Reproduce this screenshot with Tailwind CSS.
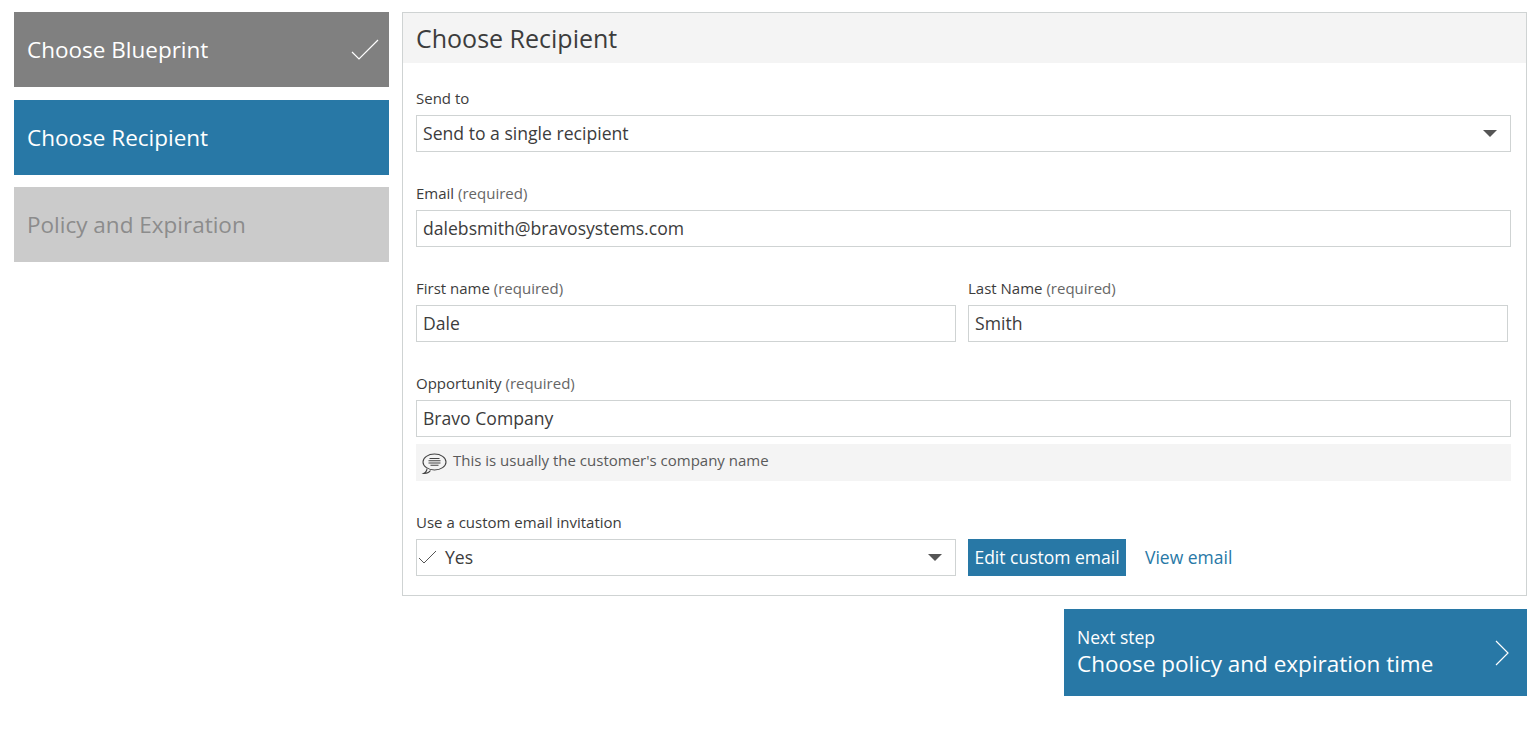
<!DOCTYPE html>
<html lang="en">
<head>
    <meta charset="UTF-8">
    <title>Choose Recipient</title>
    <script src="https://cdn.jsdelivr.net/npm/@tailwindcss/browser@4"></script>
</head>
<body class="bg-white font-['Open_Sans',sans-serif] text-[#3c3c3c]">
    <div class="flex items-start gap-[13px] pt-3 pl-[14px] w-[1527px]">
        <!-- Steps -->
        <div class="w-[375px] shrink-0 flex flex-col">
            <div class="h-[75px] bg-[#808080] text-white text-[22.5px] flex items-center justify-between pl-[13px] pr-[10px]">
                <span>Choose Blueprint</span>
                <svg width="28" height="22" viewBox="0 0 28 22" fill="none" stroke="#fff" stroke-width="1.2"><path d="M1 13l7 7L27 1"/></svg>
            </div>
            <div class="h-[75px] mt-[13px] bg-[#2878a6] text-white text-[22.5px] flex items-center pl-[13px]">Choose Recipient</div>
            <div class="h-[75px] mt-3 bg-[#cbcbcb] text-[#8c8c8c] text-[22.5px] flex items-center pl-[13px]">Policy and Expiration</div>
        </div>

        <!-- Main panel -->
        <div class="flex-1 min-w-0">
            <div class="border border-[#cfd3d3] h-[584px]">
                <div class="h-[50px] bg-[#f4f4f4] pl-[13px] text-[25px] leading-[50px]">Choose Recipient</div>
                <div class="px-[13px] pr-[15px] pt-[25px]">
                    <label class="block h-[27px] text-[15px] leading-5">Send to</label>
                    <div class="h-[37px] border border-[#cfd3d3] flex items-center justify-between pl-[6px] pr-[13px] text-[17.6px]">
                        <span>Send to a single recipient</span>
                        <span class="w-0 h-0 border-x-[7px] border-x-transparent border-t-[7px] border-t-[#555]"></span>
                    </div>

                    <label class="block mt-[31px] h-[27px] text-[15px] leading-5">Email <span class="text-[#666]">(required)</span></label>
                    <div class="h-[37px] border border-[#cfd3d3] flex items-center pl-[6px] text-[17.6px]">dalebsmith@bravosystems.com</div>

                    <div class="flex gap-3 mt-[31px]">
                        <div class="w-[540px]">
                            <label class="block h-[27px] text-[15px] leading-5">First name <span class="text-[#666]">(required)</span></label>
                            <div class="h-[37px] border border-[#cfd3d3] flex items-center pl-[6px] text-[17.6px]">Dale</div>
                        </div>
                        <div class="w-[540px]">
                            <label class="block h-[27px] text-[15px] leading-5">Last Name <span class="text-[#666]">(required)</span></label>
                            <div class="h-[37px] border border-[#cfd3d3] flex items-center pl-[6px] text-[17.6px]">Smith</div>
                        </div>
                    </div>

                    <label class="block mt-[31px] h-[27px] text-[15px] leading-5">Opportunity <span class="text-[#666]">(required)</span></label>
                    <div class="h-[37px] border border-[#cfd3d3] flex items-center pl-[6px] text-[17.6px]">Bravo Company</div>
                    <div class="h-[37px] mt-[7px] bg-[#f4f4f4] flex items-center pl-[5px] gap-[6px] text-[15px] text-[#5a5a5a]">
                        <svg width="26" height="22" viewBox="0 0 26 22" fill="none" stroke="#444" class="mt-[2px]">
                            <ellipse cx="13.500" cy="9" rx="11.500" ry="8" stroke-width="1.100"/>
                            <path d="M6 15.500c0 2.500-1.500 4-3.500 5 3 .3 5.500-1 7-3" fill="#f4f4f4" stroke-width="1.100"/>
                            <path d="M8.500 5.500h10M7.500 7.800h12M7.500 10h12M9.500 12.300h8" stroke-width="1.100"/>
                        </svg>
                        <span class="mt-[-4px]">This is usually the customer's company name</span>
                    </div>

                    <label class="block mt-[31px] h-[27px] text-[15px] leading-5">Use a custom email invitation</label>
                    <div class="flex items-center">
                        <div class="w-[540px] h-[37px] border border-[#cfd3d3] flex items-center justify-between pl-[1px] pr-[13px] text-[17.6px]">
                            <span class="flex items-center gap-[8px]">
                                <svg width="19" height="14" viewBox="0 0 19 14" fill="none" stroke="#555" stroke-width="1"><path d="M1 8l5 5L18 1"/></svg>
                                Yes
                            </span>
                            <span class="w-0 h-0 border-x-[7px] border-x-transparent border-t-[7px] border-t-[#555]"></span>
                        </div>
                        <div class="ml-3 h-[37px] w-[158px] bg-[#2878a6] text-white text-[17.500px] flex items-center justify-center">Edit custom email</div>
                        <a class="ml-[19px] text-[17.500px] text-[#2878a6]">View email</a>
                    </div>
                </div>
            </div>

            <!-- Next step -->
            <div class="mt-[13px] ml-auto w-[463px] h-[87px] bg-[#2878a6] text-white flex items-center justify-between pl-[13px] pr-[18px]">
                <div class="mt-[1px]">
                    <div class="text-[17.500px] leading-[22px]">Next step</div>
                    <div class="text-[22.500px] leading-[32px]">Choose policy and expiration time</div>
                </div>
                <svg width="14" height="26" viewBox="0 0 14 26" fill="none" stroke="#fff" stroke-width="1.200"><path d="M1 1l12 12L1 25"/></svg>
            </div>
        </div>
    </div>
</body>
</html>
